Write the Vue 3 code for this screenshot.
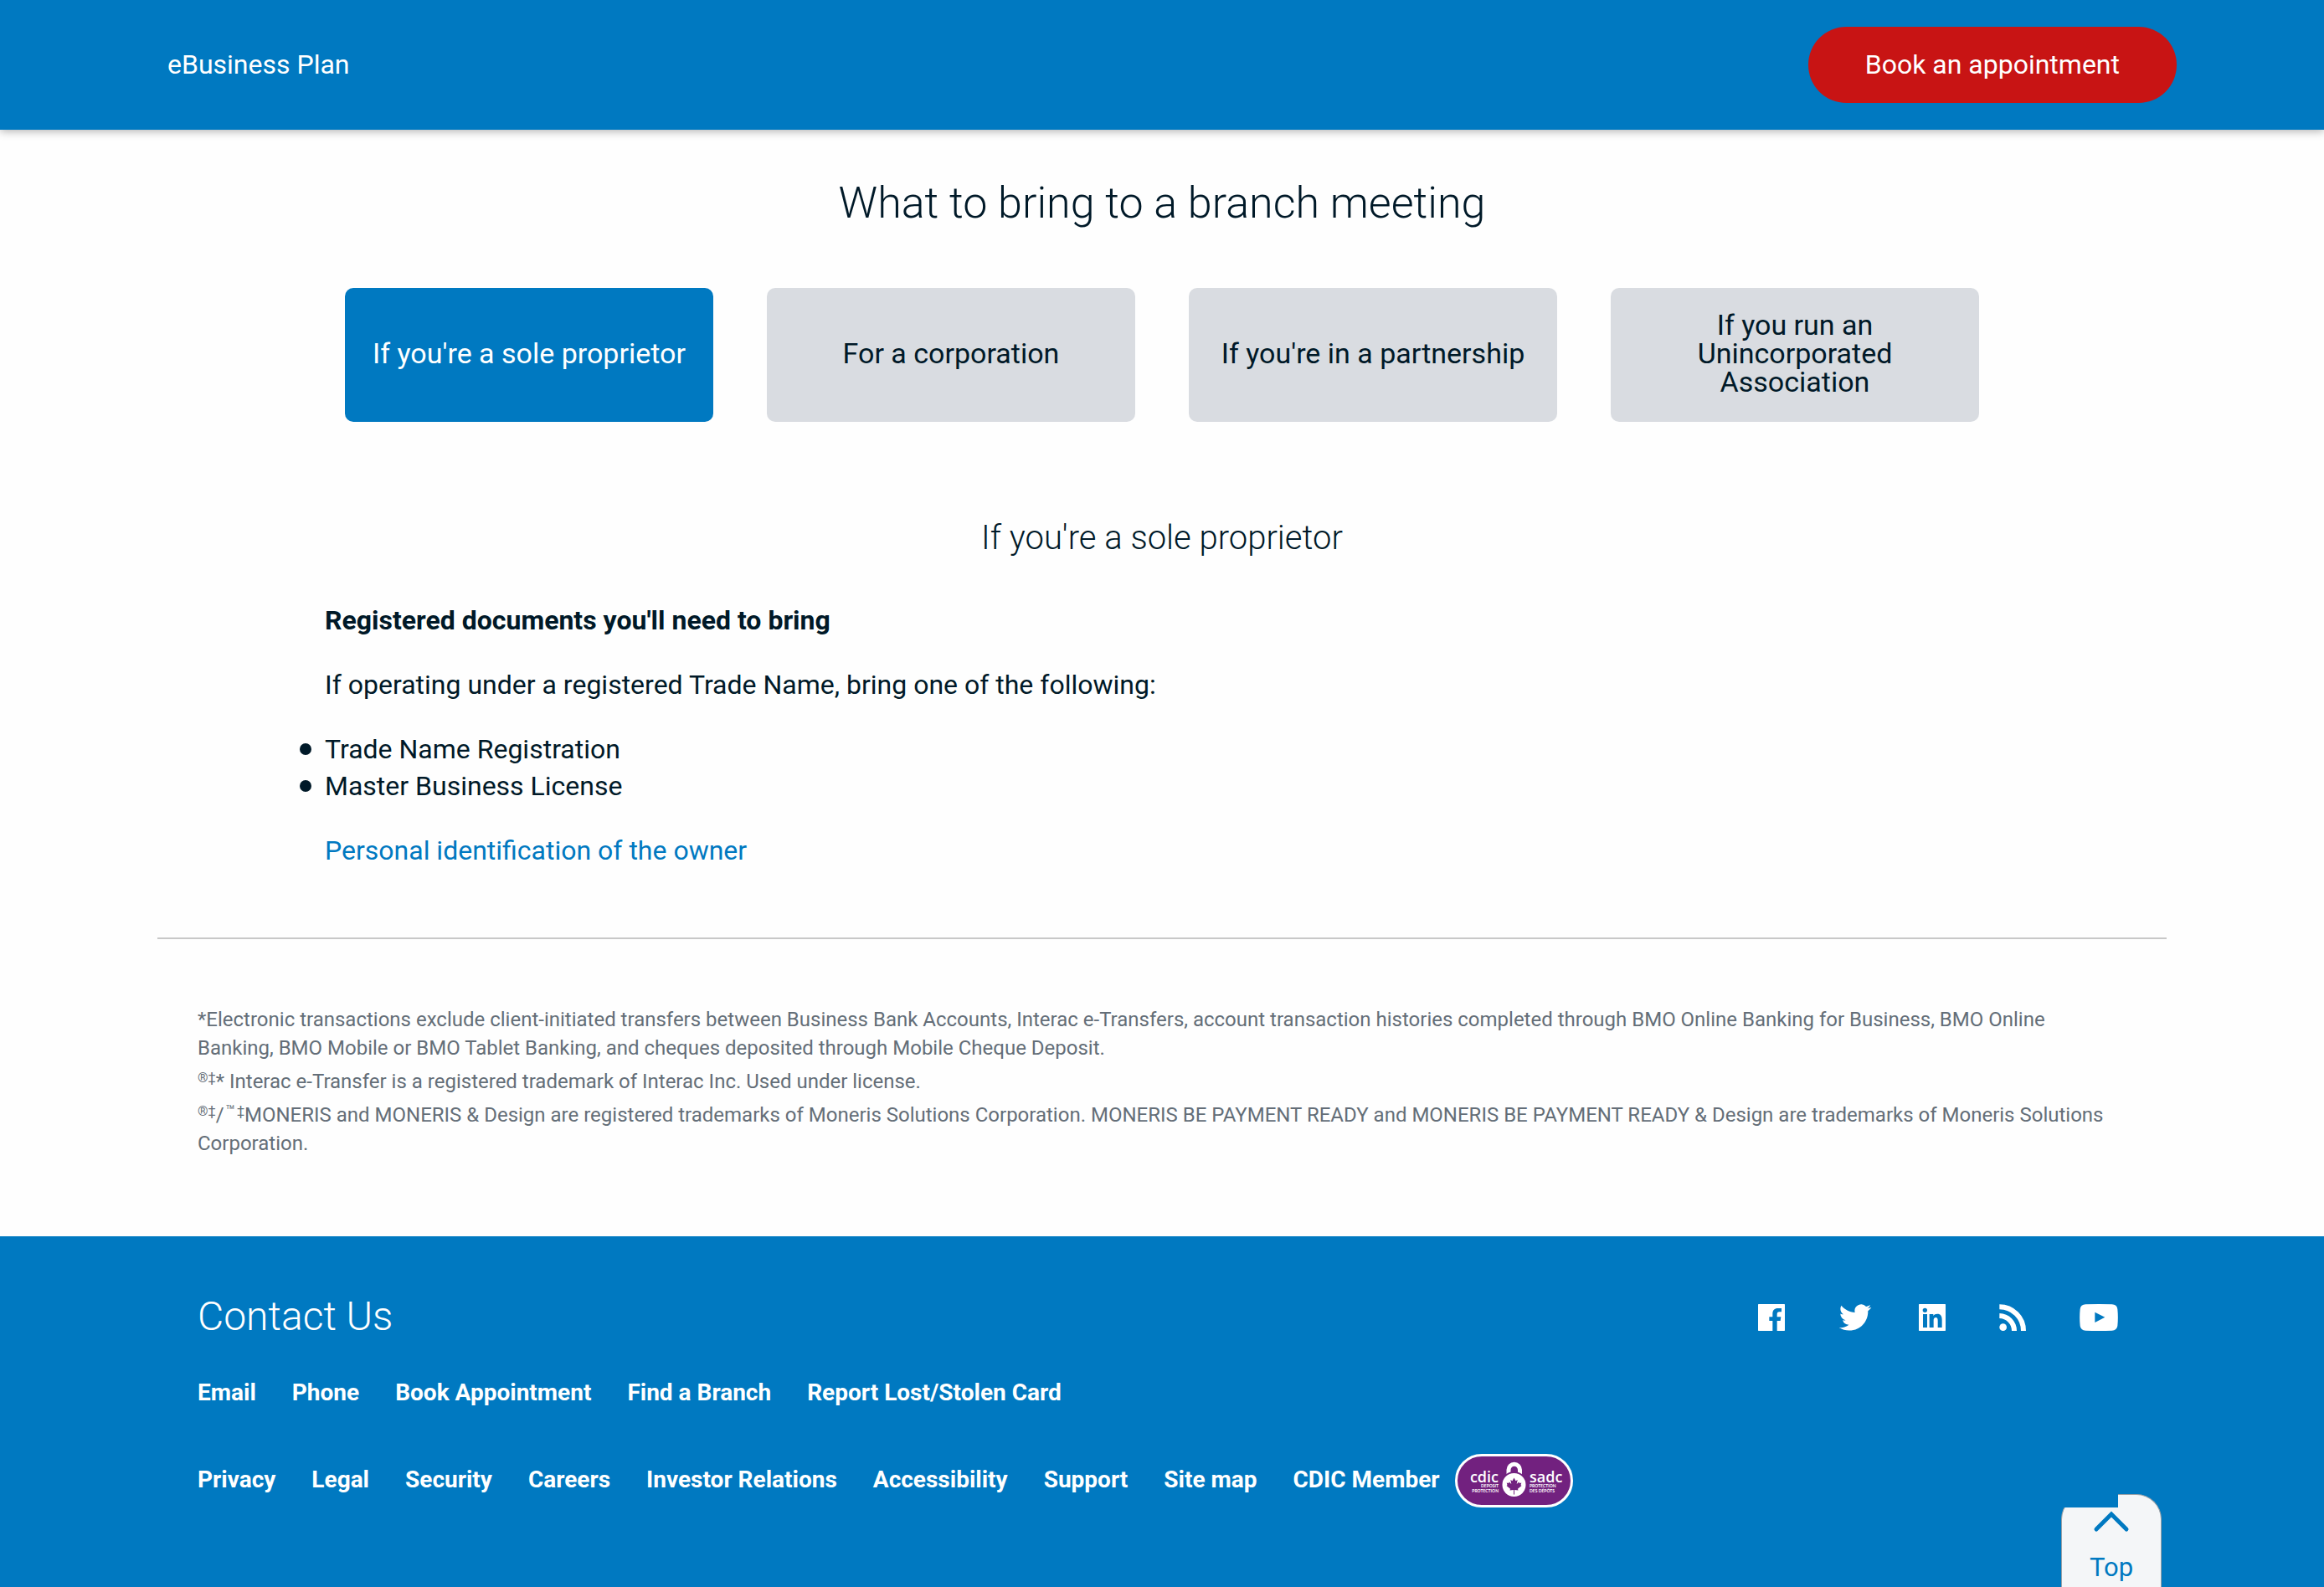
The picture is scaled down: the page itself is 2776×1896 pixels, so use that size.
<script setup>
import { ref } from 'vue'

const tabs = [
  "If you're a sole proprietor",
  'For a corporation',
  "If you're in a partnership",
  'If you run an Unincorporated Association',
]
const active = ref(0)
const contactLinks = ['Email', 'Phone', 'Book Appointment', 'Find a Branch', 'Report Lost/Stolen Card']
const siteLinks = ['Privacy', 'Legal', 'Security', 'Careers', 'Investor Relations', 'Accessibility', 'Support', 'Site map']
</script>

<template>
  <div class="page">
    <header class="bar">
      <span class="plan">eBusiness Plan</span>
      <button type="button" class="book">Book an appointment</button>
    </header>

    <main class="main">
      <h1 class="title">What to bring to a branch meeting</h1>
      <div class="tabs" role="tablist">
        <button
          v-for="(tab, i) in tabs"
          :key="tab"
          type="button"
          role="tab"
          class="tab"
          :class="{ active: active === i }"
          :aria-selected="active === i"
          @click="active = i"
        >{{ tab }}</button>
      </div>

      <section class="panel">
        <h2 class="subtitle">If you're a sole proprietor</h2>
        <p><strong>Registered documents you'll need to bring</strong></p>
        <p>If operating under a registered Trade Name, bring one of the following:</p>
        <ul class="docs">
          <li>Trade Name Registration</li>
          <li>Master Business License</li>
        </ul>
        <p><a href="#" class="link">Personal identification of the owner</a></p>
      </section>

      <section class="legal">
        <p>*Electronic transactions exclude client-initiated transfers between Business Bank Accounts, Interac e-Transfers, account transaction histories completed through BMO Online Banking for Business, BMO Online Banking, BMO Mobile or BMO Tablet Banking, and cheques deposited through Mobile Cheque Deposit.</p>
        <p><sup>®‡</sup>* Interac e-Transfer is a registered trademark of Interac Inc. Used under license.</p>
        <p><sup>®‡</sup>/<sup class="tm">™</sup><sup>‡</sup>MONERIS and MONERIS &amp; Design are registered trademarks of Moneris Solutions Corporation. MONERIS BE PAYMENT READY and MONERIS BE PAYMENT READY &amp; Design are trademarks of Moneris Solutions Corporation.</p>
      </section>
    </main>

    <footer class="footer">
      <div class="footer-inner">
        <div class="footer-head">
          <h2 class="contact">Contact Us</h2>
          <nav class="social" aria-label="Social media">
            <a href="#" aria-label="Facebook">
              <svg width="32" height="32" viewBox="0 0 96 96"><path fill-rule="evenodd" d="M2 0H94Q96 0 96 2V94Q96 96 94 96H68V60H80L82 46H68V37C68 31 70 28 76 28H84V15H71C59 15 52 22 52 34V46H40V60H52V96H2Q0 96 0 94V2Q0 0 2 0Z" /></svg>
            </a>
            <a href="#" aria-label="Twitter">
              <svg width="40" height="32" viewBox="0 2 24 20"><path d="M23.953 4.57a10 10 0 01-2.825.775 4.958 4.958 0 002.163-2.723c-.951.555-2.005.959-3.127 1.184a4.92 4.92 0 00-8.384 4.482C7.69 8.095 4.067 6.13 1.64 3.162a4.822 4.822 0 00-.666 2.475c0 1.71.87 3.213 2.188 4.096a4.904 4.904 0 01-2.228-.616v.06a4.923 4.923 0 003.946 4.827 4.996 4.996 0 01-2.212.085 4.936 4.936 0 004.604 3.417 9.867 9.867 0 01-6.102 2.105c-.39 0-.779-.023-1.17-.067a13.995 13.995 0 007.557 2.209c9.053 0 13.998-7.496 13.998-13.985 0-.21 0-.42-.015-.63A9.935 9.935 0 0024 4.59z" /></svg>
            </a>
            <a href="#" aria-label="LinkedIn">
              <svg width="32" height="32" viewBox="0 0 96 96"><path fill-rule="evenodd" d="M2 0H94Q96 0 96 2V94Q96 96 94 96H2Q0 96 0 94V2Q0 0 2 0ZM15 36H30V84H15ZM22 14A8 8 0 1 0 22 30A8 8 0 1 0 22 14ZM38 36H52V42C55 37 60 35 66 35C79 35 83 43 83 56V84H68V59C68 52 66 48 61 48C55 48 53 52 53 58V84H38Z" /></svg>
            </a>
            <a href="#" aria-label="RSS">
              <svg width="32" height="32" viewBox="0 0 96 96"><circle cx="14" cy="83" r="13" /><path fill="none" stroke="#fff" stroke-width="18" d="M1 42A54 54 0 0 1 54 96M1 10A86 86 0 0 1 87 96" /></svg>
            </a>
            <a href="#" aria-label="YouTube">
              <svg width="46" height="32" viewBox="0 0 138 96"><path fill-rule="evenodd" d="M22 1Q69 -1 116 1Q134 2 136 18Q139 48 136 78Q134 94 116 95Q69 97 22 95Q4 94 2 78Q-1 48 2 18Q4 2 22 1ZM55 29V66L91 47Z" /></svg>
            </a>
          </nav>
        </div>
        <nav class="links" aria-label="Contact">
          <a v-for="l in contactLinks" :key="l" href="#">{{ l }}</a>
        </nav>
        <nav class="links site" aria-label="Site">
          <a v-for="l in siteLinks" :key="l" href="#">{{ l }}</a>
          <a href="#" class="cdic">CDIC Member
            <svg class="badge" width="141" height="64" viewBox="0 0 141 64">
              <rect x="1.500" y="1.500" width="138" height="61" rx="30.500" fill="#72217f" stroke="#fff" stroke-width="3" />
              <g font-family="Open Sans, sans-serif">
                <text x="52" y="34" font-size="18" font-weight="600" text-anchor="end">cdic</text>
                <text x="89" y="34" font-size="18" font-weight="600">sadc</text>
                <g font-family="Lato, sans-serif" font-size="5" font-weight="700">
                  <text x="52" y="40" text-anchor="end">DEPOSIT</text>
                  <text x="52" y="46" text-anchor="end">PROTECTION</text>
                  <text x="89" y="40">PROTECTION</text>
                  <text x="89" y="46">DES DÉPÔTS</text>
                </g>
              </g>
              <path fill="none" stroke="#fff" stroke-width="5" d="M64 25V19A6.700 6.700 0 0 1 77.500 19V25" />
              <circle cx="70.500" cy="37" r="15" stroke="#72217f" stroke-width="2" />
              <path fill="#72217f" d="M70.500 28.500L72.500 32.200L74.700 31L73.700 36L76.300 33.500L77 35L79.300 34.600L78.500 37.300L79.500 38L75 41.800L75.500 43.500L71 43V48.500H70V43L65.500 43.500L66 41.800L61.500 38L62.500 37.300L61.700 34.600L64 35L64.700 33.500L67.300 36L66.300 31L68.500 32.200Z" />
            </svg>
          </a>
        </nav>
      </div>
    </footer>

    <a href="#" class="top">
      <svg width="44" height="28" viewBox="0 0 44 28"><path fill="none" stroke="#0079c1" stroke-width="5" stroke-linecap="round" d="M4 22L22 4L40 22" /></svg>
      <span>Top</span>
    </a>
  </div>
</template>

<style>
body {
  margin: 0;
  background: #fefefe;
}
</style>

<style scoped>
.page {
  display: flex;
  flex-direction: column;
  min-height: 100vh;
  font-family: Roboto, "Liberation Sans", sans-serif;
  font-size: 32px;
  line-height: 44px;
  color: #001928;
}
.bar {
  display: flex;
  align-items: center;
  justify-content: space-between;
  padding: 32px 176px 32px 200px;
  background: #0079c1;
  color: #fff;
  box-shadow: 0 2px 10px rgba(0, 0, 0, 0.3);
}
.plan {
  padding-bottom: 2px;
}
.book {
  padding: 23px 68px 24px;
  border: 0;
  border-radius: 46px;
  background: #c81414;
  color: #fff;
  font: inherit;
}
.main {
  box-sizing: border-box;
  width: 100%;
  max-width: 2400px;
  margin: 0 auto;
}
.title {
  margin: 58px 0 71px;
  font-size: 52px;
  line-height: 60px;
  font-weight: 300;
  text-align: center;
}
.tabs {
  display: grid;
  grid-template-columns: repeat(4, 1fr);
  gap: 64px;
  padding: 0 224px;
}
.tab {
  min-height: 160px;
  padding: 16px 32px 20px;
  border: 0;
  border-radius: 10px;
  background: #d9dce1;
  color: #001928;
  font: inherit;
  font-size: 34px;
  line-height: 34px;
}
.tab.active {
  background: #0079c1;
  color: #fff;
}
.panel {
  padding: 113px 200px 82px;
  border-bottom: 2px solid #c8c8c8;
}
.subtitle {
  margin: 0 0 50px;
  font-size: 40px;
  line-height: 52px;
  font-weight: 300;
  text-align: center;
}
.panel p,
.docs {
  margin: 0 0 33px;
}
.docs {
  padding: 0;
  list-style: none;
}
.docs li {
  position: relative;
}
.docs li::before {
  content: "";
  position: absolute;
  left: -30px;
  top: 15px;
  width: 14px;
  height: 14px;
  border-radius: 50%;
  background: currentColor;
}
.panel p:last-child {
  margin: 0;
}
.link {
  color: #0079c1;
  text-decoration: none;
}
.legal {
  padding: 79px 56px 88px 48px;
  color: #646e78;
  font-size: 24px;
  line-height: 34px;
}
.legal p {
  margin: 0 0 6px;
}
.legal sup {
  font-size: 16px;
  line-height: 0;
  vertical-align: 7px;
}
.legal .tm {
  padding: 0 2px;
  font-size: 18px;
}
.footer {
  flex: 1;
  background: #0079c1;
  color: #fff;
}
.footer-inner {
  box-sizing: border-box;
  max-width: 2400px;
  margin: 0 auto;
  padding: 64px 48px;
}
.footer-head {
  display: flex;
  justify-content: space-between;
  align-items: center;
}
.contact {
  margin: 0;
  font-size: 48px;
  line-height: 64px;
  font-weight: 300;
}
.social {
  display: flex;
  gap: 64px;
  padding: 2px 10px 0 0;
}
.social a {
  display: block;
  min-width: 32px;
  height: 32px;
}
.social a:nth-child(2) {
  width: 32px;
}
.social svg {
  display: block;
}
svg {
  fill: #fff;
}
.links {
  display: flex;
  flex-wrap: wrap;
  align-items: center;
  gap: 0 43px;
  margin-top: 37px;
  font-size: 28px;
  line-height: 44px;
  font-weight: 700;
}
.links a {
  color: #fff;
  text-decoration: none;
}
.site {
  margin-top: 48px;
}
.cdic {
  display: flex;
  align-items: center;
  gap: 18px;
}
.badge {
  padding-top: 3px;
}
.top {
  position: fixed;
  right: 194px;
  bottom: 0;
  box-sizing: border-box;
  display: flex;
  flex-direction: column;
  align-items: center;
  gap: 18px;
  width: 120px;
  height: 111px;
  padding-top: 19px;
  border: 1px solid #9aa0a6;
  border-bottom: 0;
  border-radius: 30px 30px 0 0;
  background: #f4f6f8;
  color: #0079c1;
  font-size: 31px;
  clip-path: polygon(0 16px, 68px 16px, 68px 0, 100% 0, 100% 100%, 0 100%);
  text-decoration: none;
}
</style>
